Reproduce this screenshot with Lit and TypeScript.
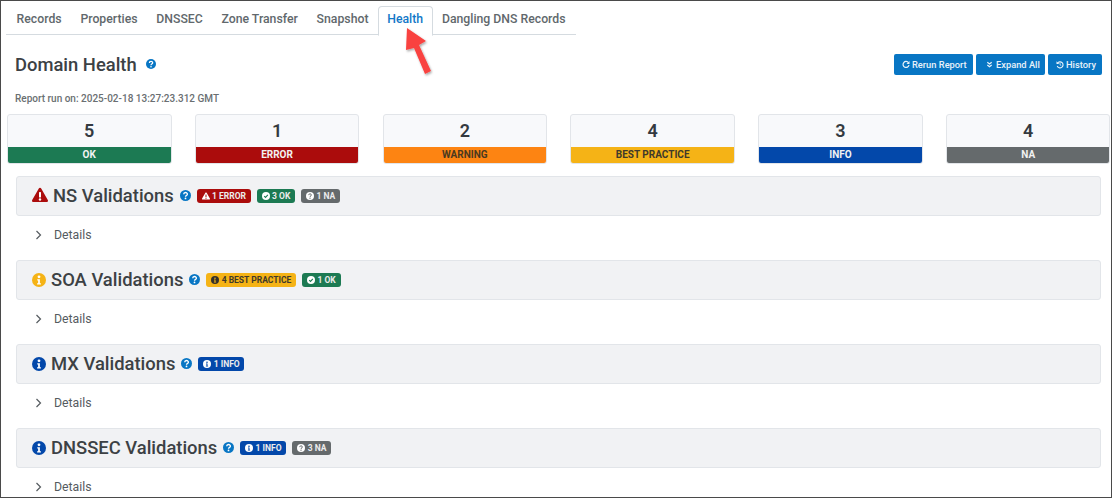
import { LitElement, html, css, svg } from "lit";
import { customElement } from "lit/decorators.js";

const info = (c: string, fg = "#fff") => svg`<circle cx="8" cy="8" r="8" fill=${c}/><circle cx="8" cy="4.400" r="1.600" fill=${fg}/><path d="M6 7h3v4.600h1.200v1.600H5.800v-1.600H7V8.600H6z" fill=${fg}/>`;
const check = (c: string, fg = "#fff") => svg`<circle cx="8" cy="8" r="8" fill=${c}/><path d="M4.400 8.200l2.600 2.600 4.700-5" fill="none" stroke=${fg} stroke-width="2.200"/>`;
const question = (c: string, fg = "#fff") => svg`<circle cx="8" cy="8" r="8" fill=${c}/><path d="M5.400 6.200c0-3.300 5.300-3.300 5.300-.2 0 2-2.700 2-2.700 3.800" fill="none" stroke=${fg} stroke-width="2"/><circle cx="8" cy="12.300" r="1.300" fill=${fg}/>`;
const warn = (c: string, fg = "#fff") => svg`<path d="M8 .8c.5 0 1 .3 1.200.7l6.600 11.600c.5.9-.1 2-1.200 2H1.400c-1.100 0-1.700-1.100-1.200-2L6.800 1.500C7 1.100 7.500.8 8 .8z" fill=${c}/><rect x="7" y="5" width="2" height="5.500" rx=".6" fill=${fg}/><circle cx="8" cy="12.500" r="1.200" fill=${fg}/>`;

const ic = (body: unknown, cls: string) => html`<svg class=${cls} viewBox="0 0 16 16">${body}</svg>`;

type Badge = { kind: string; label: string };
type Section = { title: string; icon: unknown; sev: string; badges: Badge[] };

const badgeIcon: Record<string, (c: string) => unknown> = {
  error: (c) => warn("#fff", c),
  ok: (c) => check("#fff", c),
  na: (c) => question("#fff", c),
  best: (c) => info("#33302a", c),
  info: (c) => info("#fff", c),
};

const sections: Section[] = [
  { title: "NS Validations", icon: warn("#ab0c0c"), sev: "sev wide", badges: [{ kind: "error", label: "1 ERROR" }, { kind: "ok", label: "3 OK" }, { kind: "na", label: "1 NA" }] },
  { title: "SOA Validations", icon: info("#f5b316"), sev: "sev", badges: [{ kind: "best", label: "4 BEST PRACTICE" }, { kind: "ok", label: "1 OK" }] },
  { title: "MX Validations", icon: info("#0348aa"), sev: "sev", badges: [{ kind: "info", label: "1 INFO" }] },
  { title: "DNSSEC Validations", icon: info("#0348aa"), sev: "sev", badges: [{ kind: "info", label: "1 INFO" }, { kind: "na", label: "3 NA" }] },
];

const badgeColor: Record<string, string> = { error: "#ab0c0c", ok: "#1c7a53", na: "#656a6c", best: "#f5b316", info: "#0348aa" };

const stats = [
  { n: 5, label: "OK", kind: "ok" },
  { n: 1, label: "ERROR", kind: "error" },
  { n: 2, label: "WARNING", kind: "warning" },
  { n: 4, label: "BEST PRACTICE", kind: "best" },
  { n: 3, label: "INFO", kind: "info" },
  { n: 4, label: "NA", kind: "na" },
];

const tabs = ["Records", "Properties", "DNSSEC", "Zone Transfer", "Snapshot", "Health", "Dangling DNS Records"];

@customElement("app-root")
export class AppRoot extends LitElement {
  static styles = css`
    :host { display: block; width: 1113px; height: 498px; font-family: Roboto, sans-serif; color: #343a40; }
    * { box-sizing: border-box; }
    .frame { position: relative; width: 1112px; height: 498px; overflow: hidden; background: #fff; border: 1px solid #4a4a4a; padding-top: 5px; }
    .tabs { display: flex; margin-left: 5px; width: 570px; height: 29px; border-bottom: 1px solid #d5dbe0; padding-left: 1.200px; }
    .tab { height: 29px; padding: 4px 8.400px 0; font-size: 12.250px; font-weight: 500; line-height: 16px; color: #61686c; white-space: nowrap; border: 1px solid transparent; border-radius: 4px 4px 0 0; }
    .tab.active { color: #1278c8; background: #fff; border-color: #d5dbe0 #d5dbe0 #fff; height: 30px; }
    .head { display: flex; justify-content: space-between; align-items: center; margin: 18px 9px 0 14px; height: 22px; }
    .title { display: flex; align-items: center; gap: 9px; font-size: 18.400px; font-weight: 500; color: #3c4144; }
    .help { width: 10px; height: 10px; flex: none; }
    .btns { display: flex; gap: 3px; }
    .btn { display: flex; align-items: center; gap: 2px; height: 21px; background: #0876c4; color: #e8f2fa; font-size: 9.300px; font-weight: 500; border-radius: 2px; white-space: nowrap; }
    .btn svg { width: 8px; height: 9px; flex: none; }
    .btn.rerun { width: 79px; padding-left: 8px; }
    .btn.expand { width: 69px; padding-left: 10px; gap: 3px; }
    .btn.expand svg { width: 7px; height: 7px; }
    .btn.history { width: 54px; padding-left: 8px; gap: 2px; }
    .run { margin: 17px 0 0 14px; font-size: 10px; font-weight: 500; color: #6a6f72; line-height: 14px; }
    .stats { display: flex; gap: 23.300px; margin: 8px 0 0 6px; width: 1103.500px; }
    .stat { flex: 1; height: 50px; border: 1px solid #e2e5e9; border-radius: 3px; background: #f8f9fb; overflow: hidden; display: flex; flex-direction: column; }
    .num { flex: 1; text-align: center; font-size: 18px; font-weight: 600; line-height: 32px; color: #343a40; }
    .lab { height: 16px; line-height: 16px; text-align: center; font-size: 10px; font-weight: 700; color: #f2f2f2; }
    .lab.ok { background: #1c7a53; }
    .lab.error { background: #ab0c0c; }
    .lab.warning { background: #fd8412; color: #4a3a20; }
    .lab.best { background: #f5b316; color: #3f3a2a; }
    .lab.info { background: #0348aa; }
    .lab.na { background: #656a6c; }
    .sections { margin: 12px 0 0 15px; width: 1085px; }
    .panel { display: flex; align-items: center; height: 40px; padding-left: 15px; background: #f1f2f4; border: 1px solid #e2e5e9; border-radius: 3px; }
    .sev { width: 14px; height: 14px; flex: none; margin: -1px 5px 0 0; }
    .sev.wide { width: 16px; height: 16px; margin: -2px 5px 0 0; }
    .ptitle { font-size: 18.400px; font-weight: 500; line-height: 22px; color: #3c4144; white-space: nowrap; margin: 0 6px 0 0; }
    .phelp { width: 11px; height: 11px; flex: none; margin: -1px 6px 0 0; }
    .badges { display: flex; gap: 6px; }
    .badge { display: flex; align-items: center; gap: 2.500px; height: 14px; padding: 0 4.800px; border-radius: 3px; font-size: 8.500px; font-weight: 700; color: #ececec; white-space: nowrap; }
    .badge.ok { background: #1c7a53; }
    .badge.error { background: #ab0c0c; }
    .badge.na { background: #656a6c; }
    .badge.best { background: #f5b316; color: #40392a; }
    .badge.info { background: #0348aa; }
    .badge svg { width: 8px; height: 8px; }
    .details { display: flex; align-items: center; height: 44px; padding: 0 0 6px 19px; font-size: 12.300px; color: #555b5f; }
    .details svg { width: 7px; height: 10px; margin-right: 12px; }
    .arrow { position: absolute; left: 396px; top: 22px; width: 46px; height: 60px; overflow: visible; }
  `;

  render() {
    return html`<div class="frame">
      <div class="tabs">
        ${tabs.map((t) => html`<div class="tab ${t === "Health" ? "active" : ""}">${t}</div>`)}
      </div>
      <div class="head">
        <div class="title">Domain Health ${ic(question("#0876c4"), "help")}</div>
        <div class="btns">
          <div class="btn rerun">
            <svg viewBox="0 0 16 16"><path d="M13 4.500A6 6 0 1 0 14 9" fill="none" stroke="currentColor" stroke-width="2.500"/><path d="M15 1v6H9z" fill="currentColor"/></svg>
            Rerun Report
          </div>
          <div class="btn expand">
            <svg viewBox="0 0 16 16"><path d="M3 3l5 4 5-4M3 9l5 4 5-4" fill="none" stroke="currentColor" stroke-width="2.800"/></svg>
            Expand All
          </div>
          <div class="btn history">
            <svg viewBox="0 0 16 16"><path d="M3 5.500A6 6 0 1 1 2.500 11" fill="none" stroke="currentColor" stroke-width="2.200"/><path d="M1 1.500v5.500h5.500z" fill="currentColor"/><path d="M8 5v3.500l2.500 1.500" fill="none" stroke="currentColor" stroke-width="1.600"/></svg>
            History
          </div>
        </div>
      </div>
      <div class="run">Report run on: 2025-02-18 13:27:23.312 GMT</div>
      <div class="stats">
        ${stats.map((s) => html`<div class="stat"><div class="num">${s.n}</div><div class="lab ${s.kind}">${s.label}</div></div>`)}
      </div>
      <div class="sections">
        ${sections.map((s) => html`
          <div class="panel">
            ${ic(s.icon, s.sev)}
            <span class="ptitle">${s.title}</span>
            ${ic(question("#0876c4"), "phelp")}
            <div class="badges">
              ${s.badges.map((b) => html`<span class="badge ${b.kind}">
                ${ic(badgeIcon[b.kind](badgeColor[b.kind]), "")}${b.label}</span>`)}
            </div>
          </div>
          <div class="details">
            <svg viewBox="0 0 7 10"><path d="M1.500 1l4 4-4 4" fill="none" stroke="#555b5f" stroke-width="1.200"/></svg>
            Details
          </div>
        `)}
      </div>
      <svg class="arrow" viewBox="0 0 46 60">
        <defs><filter id="sh" x="-30%" y="-30%" width="160%" height="160%"><feDropShadow dx="1" dy="1.500" stdDeviation="1.200" flood-color="#000" flood-opacity=".35"/></filter></defs>
        <path d="M10 5L29 18l-7 4L34 48l-6 3L17 25l-8 2z" fill="#f9423f" filter="url(#sh)"/>
      </svg>
    </div>`;
  }
}
